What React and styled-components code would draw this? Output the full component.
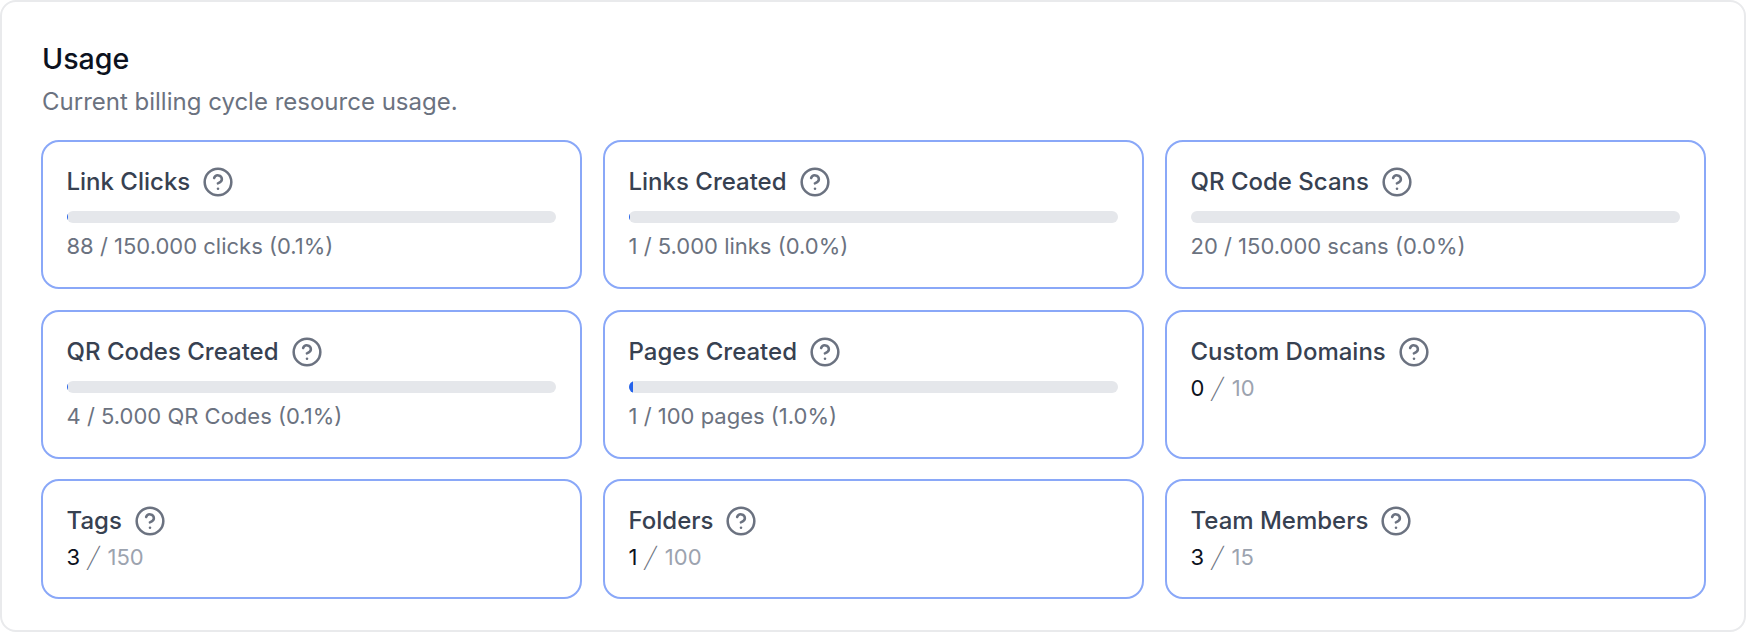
import React from "react";
import styled, { createGlobalStyle } from "styled-components";
import { CircleHelp } from "lucide-react";

const GlobalStyle = createGlobalStyle`
  html, body {
    margin: 0;
    padding: 0;
    background: #fff;
  }
  * {
    box-sizing: border-box;
  }
`;

const metered = [
  { title: "Link Clicks", text: "88 / 150.000 clicks (0.1%)", percent: 0.1 },
  { title: "Links Created", text: "1 / 5.000 links (0.0%)", percent: 0.02 },
  { title: "QR Code Scans", text: "20 / 150.000 scans (0.0%)", percent: 0 },
  { title: "QR Codes Created", text: "4 / 5.000 QR Codes (0.1%)", percent: 0.08 },
  { title: "Pages Created", text: "1 / 100 pages (1.0%)", percent: 1 },
];

const counted = [
  { title: "Custom Domains", used: 0, limit: 10 },
  { title: "Tags", used: 3, limit: 150 },
  { title: "Folders", used: 1, limit: 100 },
  { title: "Team Members", used: 3, limit: 15 },
];

const Heading = ({ children }) => (
  <TitleRow>
    <Title>{children}</Title>
    <HelpIcon size={32} strokeWidth={1.9} />
  </TitleRow>
);

const App = () => (
  <>
    <GlobalStyle />
    <Panel>
      <PanelTitle>Usage</PanelTitle>
      <PanelText>Current billing cycle resource usage.</PanelText>
      <Grid>
        {metered.map((item) => (
          <Tile key={item.title}>
            <Heading>{item.title}</Heading>
            <Track>
              <Fill style={{ width: `${item.percent}%` }} />
            </Track>
            <Stat>{item.text}</Stat>
          </Tile>
        ))}
        {counted.map((item) => (
          <Tile key={item.title}>
            <Heading>{item.title}</Heading>
            <Count>
              <Used>{item.used}</Used>
              <Slash>/</Slash>
              <Limit>{item.limit}</Limit>
            </Count>
          </Tile>
        ))}
      </Grid>
    </Panel>
  </>
);

const Panel = styled.section`
  width: 1746px;
  height: 632px;
  padding: 41px 38px 32px 38.5px;
  background: #fff;
  border: 2px solid #e9eaec;
  border-radius: 16px;
  font-family: "Inter", "Liberation Sans", sans-serif;
`;

const PanelTitle = styled.h2`
  margin: 0;
  padding-left: 1.5px;
  font-size: 28.6px;
  line-height: 32px;
  font-weight: 500;
  color: #0c1220;
`;

const PanelText = styled.p`
  margin: 12px 0 0;
  padding-left: 1.5px;
  font-size: 24px;
  line-height: 30px;
  color: #6b7280;
`;

const Grid = styled.div`
  display: grid;
  grid-template-columns: repeat(3, 1fr);
  grid-template-rows: 149px 149px 120px;
  gap: 20.5px;
  margin-top: 23px;
`;

const Tile = styled.div`
  padding: 24px 24px 22px;
  border: 2px solid #8aa8f8;
  border-radius: 18px;
  background: #fff;
`;

const TitleRow = styled.div`
  display: flex;
  align-items: center;
  gap: 12px;
  height: 32px;
`;

const Title = styled.span`
  font-size: 24px;
  line-height: 32px;
  font-weight: 500;
  color: #374151;
`;

const HelpIcon = styled(CircleHelp)`
  flex: none;
  color: #6b7280;
`;

const Track = styled.div`
  height: 12px;
  margin-top: 13px;
  overflow: hidden;
  background: #e5e7eb;
  border-radius: 6px;
`;

const Fill = styled.div`
  height: 100%;
  background: #2563eb;
`;

const Stat = styled.div`
  margin-top: 8px;
  font-size: 22px;
  line-height: 30px;
  color: #6b7280;
`;

const Count = styled.div`
  display: flex;
  align-items: center;
  margin-top: 5px;
  font-size: 22px;
  line-height: 30px;
`;

const Used = styled.span`
  color: #0c1220;
`;

const Slash = styled.span`
  display: inline-block;
  margin: 0 9px;
  font-size: 28px;
  line-height: 30px;
  font-weight: 200;
  color: #6b7280;
  transform: skewX(-14deg);
`;

const Limit = styled.span`
  color: #9ca3af;
`;

export default App;
